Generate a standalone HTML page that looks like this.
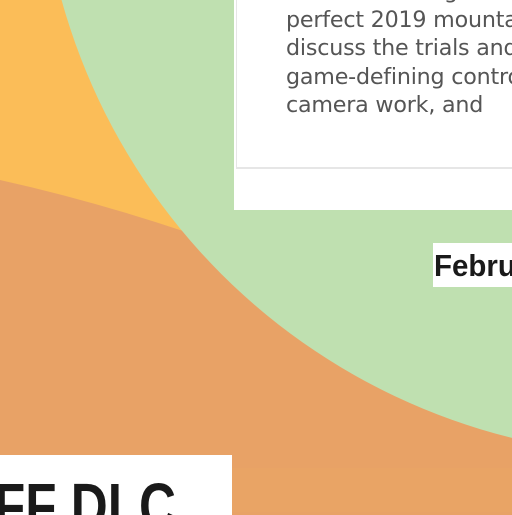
<!DOCTYPE html>
<html><head><style>
html,body{margin:0;padding:0}
body{width:512px;height:512px;overflow:hidden;position:relative;background:#e8a266;font-family:"Liberation Sans",sans-serif}
.card{position:absolute;left:234px;top:-2px;width:278px;height:212px;background:#fff;overflow:hidden}
.inner{position:absolute;left:2px;top:0;width:290px;height:169px;border-left:1px solid #e6e6e6;border-bottom:2px solid #e6e6e6;}
.txt{position:absolute;left:49px;top:-21px;font-family:"DejaVu Sans",sans-serif;font-size:22.2px;line-height:28.5px;color:#555;white-space:nowrap;letter-spacing:-0.2px}
.feb{position:absolute;left:433px;top:243px;width:79px;height:44px;background:#fff;overflow:hidden}
.feb span{position:absolute;left:1px;top:0;font-weight:bold;font-size:31px;line-height:46px;color:#1a1a1a;transform:scaleX(0.95);transform-origin:0 0;white-space:nowrap}
.dlc{position:absolute;left:0;top:455px;width:232px;height:60px;background:#fff;overflow:hidden}
.dlc span{position:absolute;left:-6px;top:20px;font-weight:bold;font-size:64px;line-height:62px;color:#1a1a1a;white-space:nowrap;transform:scaleX(0.8);transform-origin:0 0}
</style></head><body>
<svg width="512" height="512" style="position:absolute;left:0;top:0">
<rect width="512" height="512" fill="#e8a266"/>
<rect x="232" y="468" width="280" height="44" fill="#e9a465"/>
<path d="M0 0 L220 0 L220 250 L183 231 Q90 200 0 180 Z" fill="#fbbd58"/>
<circle cx="661" cy="-166" r="622" fill="#bfe0b0"/>
</svg>
<div class="card"><div class="inner"><div class="txt">wonderful things about a<br>perfect 2019 mountain<br>discuss the trials and<br>game-defining controls,<br>camera work, and</div></div></div>
<div class="feb"><span>February</span></div>
<div class="dlc"><span>FF DLC</span></div>
</body></html>
